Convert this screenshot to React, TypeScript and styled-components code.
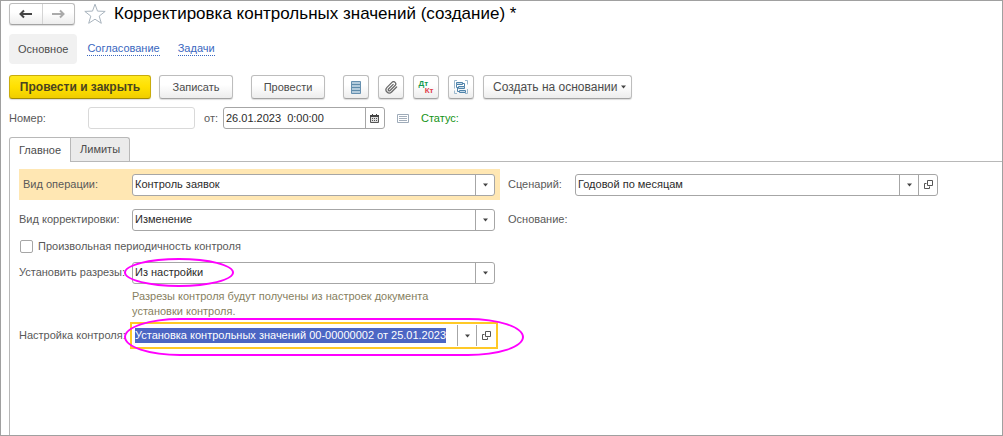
import React, { useEffect, useRef } from 'react';
import styled, { createGlobalStyle, css } from 'styled-components';

const GlobalStyle = createGlobalStyle`
  *, *::before, *::after { box-sizing: border-box; }
  body { margin: 0; background: #fff; }
  body, button, input, select {
    font-family: "Liberation Sans", Arial, sans-serif;
    font-size: 11px;
    line-height: 15px;
    color: #4c4c4c;
  }
`;

const Page = styled.main`
  display: flex;
  flex-direction: column;
  min-height: 100vh;
  padding: 2px 0 0 8px;
  border: 1px solid #a0a0a0;
`;

const TitleBar = styled.header`
  display: flex;
  align-items: center;
  height: 22px;
`;

const raised = css`
  border: 1px solid #bdbdbd;
  border-bottom-color: #a3a3a3;
  border-radius: 3px;
  background: linear-gradient(#fff 40%, #ededed);
  box-shadow: 0 1px 1px #ddd;
`;

const History = styled.nav`
  ${raised}
  display: flex;
  width: 66px;
  height: 22px;
`;

const HistoryButton = styled.button`
  display: flex;
  flex: 1;
  align-items: center;
  justify-content: center;
  padding: 0;
  border: 0;
  background: none;
  & + & { border-left: 1px solid #d4d4d4; }
`;

const StarButton = styled.button`
  display: flex;
  margin: 0 8px 0 9px;
  padding: 0;
  border: 0;
  background: none;
`;

const Title = styled.h1`
  margin: 0;
  font-size: 17px;
  font-weight: 400;
  line-height: 20px;
  color: #000;
`;

const Sections = styled.nav`
  display: flex;
  align-items: center;
  gap: 18px;
  margin-top: 9px;
`;

const SectionCurrent = styled.a`
  padding: 8px 9px 7px;
  border-radius: 4px;
  background: #f1f1f1;
  color: #4c4c4c;
  text-decoration: none;
  margin-right: -8px;
`;

const SectionLink = styled.a`
  color: #3a67c0;
  line-height: 13px;
  text-decoration: none;
  border-bottom: 1px dotted #3a67c0;
`;

const Toolbar = styled.div`
  display: flex;
  align-items: center;
  gap: 8px;
  margin-top: 11px;
`;

const ButtonGroup = styled.div`
  display: flex;
  gap: 9px;
  margin-left: 10px;
`;

type ButtonKind = 'plain' | 'primary' | 'icon' | 'menu';

const buttonKinds = {
  plain: css`min-width: 74px;`,
  icon: css`width: 26px; padding: 0;`,
  menu: css`padding: 0 4px 0 9px; font-size: 12px;`,
  primary: css`
    min-width: 142px;
    border-color: #c9ac0c;
    border-bottom-color: #a38b05;
    background: linear-gradient(#ffe91f, #ffe000 50%, #efcd00);
    font-size: 12px;
    font-weight: 700;
    color: #4a4420;
  `,
};

const Button = styled.button<{ $kind?: ButtonKind }>`
  ${raised}
  display: flex;
  align-items: center;
  justify-content: center;
  gap: 2px;
  height: 24px;
  padding: 0 9px;
  white-space: nowrap;
  ${p => buttonKinds[p.$kind ?? 'plain']}
`;

const NumberRow = styled.div`
  display: flex;
  align-items: center;
  margin-top: 8px;
`;

const Label = styled.label<{ $width?: number }>`
  flex: none;
  width: ${p => (p.$width ? `${p.$width}px` : 'auto')};
  color: #595959;
  white-space: nowrap;
`;

const NumberInput = styled.input`
  width: 107px;
  height: 22px;
  margin-right: 9px;
  padding: 0 3px;
  border: 1px solid #d9d9d9;
  border-radius: 3px;
`;

const Field = styled.div<{ $active?: boolean }>`
  position: relative;
  display: flex;
  flex: 1;
  min-width: 0;
  height: 22px;
  border: 1px solid #a6a6a6;
  border-radius: 3px;
  background: #fff;
  ${p => p.$active && css`
    height: 27px;
    margin: 0 -3px 0 -2px;
    padding: 1px;
    border: 2px solid #ffc926;
    border-radius: 0;
  `}
`;

const DateField = styled(Field)`
  flex: none;
  width: 162px;
  margin: 0 12px 0 5px;
`;

const fieldText = css`
  flex: 1;
  min-width: 0;
  padding: 0 2px;
  border: 0;
  outline: 0;
  background: none;
  color: #2b2b2b;
`;

const TextInput = styled.input`
  ${fieldText}
  white-space: pre;
  &::selection { background: #4c66c4; color: #fff; }
`;

const Select = styled.select`
  ${fieldText}
  appearance: none;
`;

const FieldButton = styled.button`
  display: flex;
  flex: none;
  align-items: center;
  justify-content: center;
  width: 19px;
  padding: 0;
  border: 0;
  border-left: 1px solid #a6a6a6;
  background: none;
`;

const Status = styled.span`
  margin-left: 12px;
  color: #149314;
`;

const TabList = styled.div`
  display: flex;
  margin-top: 8px;
`;

const Tab = styled.button<{ $active?: boolean }>`
  position: relative;
  height: 24px;
  padding: 0 9px;
  border: 1px solid #b8b8b8;
  border-bottom: 0;
  background: ${p => (p.$active ? '#fff' : '#ebebeb')};
  border-radius: ${p => (p.$active ? '3px 0 0 0' : '0 3px 0 0')};
  & + & { border-left: 0; }
  ${p => p.$active && css`
    height: 25px;
    margin-bottom: -1px;
  `}
`;

const Pane = styled.section`
  flex: 1;
  padding: 7px 8px 8px 9px;
  border-top: 1px solid #b8b8b8;
  border-left: 1px solid #b8b8b8;
`;

const Columns = styled.div`
  display: grid;
  grid-template-columns: minmax(0, 481px) minmax(0, 435px);
  gap: 8px;
`;

const Column = styled.div`
  display: flex;
  flex-direction: column;
`;

const FormRow = styled.div<{ $highlight?: boolean }>`
  display: flex;
  align-items: center;
  min-height: 31px;
  padding-right: 5px;
  background: ${p => (p.$highlight ? '#ffe7b3' : 'none')};
  ${p => p.$highlight && css`
    & > ${Label} { padding-left: 4px; }
  `}
`;

const RowStack = styled.div`
  display: flex;
  flex-direction: column;
  gap: 4px;
`;

const CheckRow = styled.label`
  display: flex;
  align-items: center;
  gap: 5px;
  height: 22px;
  color: #595959;
`;

const CheckBox = styled.input`
  appearance: none;
  width: 13px;
  height: 13px;
  margin: 0 0 0 1px;
  border: 1px solid #a6a6a6;
  border-radius: 2px;
  background: #fff;
`;

const Hint = styled.p`
  max-width: 330px;
  margin: 1px 0 1px 113px;
  color: #877f5f;
`;

const Marked = styled.div`
  position: relative;
`;

const Mark = styled.span<{ $wide?: boolean }>`
  position: absolute;
  left: 105px;
  top: ${p => (p.$wide ? -2 : 1)}px;
  width: ${p => (p.$wide ? 400 : 110)}px;
  height: ${p => (p.$wide ? 38 : 29)}px;
  border: 2px solid #f0f;
  border-radius: ${p => (p.$wide ? '56px / 50%' : '50%')};
  pointer-events: none;
`;

const Arrow = () => (
  <svg width="7" height="4" viewBox="0 0 7 4" aria-hidden="true">
    <path d="M1 .5h5L3.500 3.500z" fill="#444" />
  </svg>
);

const OpenIcon = () => (
  <svg width="9" height="9" viewBox="0 0 9 9" fill="none" stroke="#555" aria-hidden="true">
    <path d="M3.500.5h5v5h-5zM2.500 3.500h-2v5h5v-2" />
  </svg>
);

const HistoryArrow = ({ color, forward }: { color: string; forward?: boolean }) => (
  <svg width="13" height="10" viewBox="0 0 13 10" fill="none" stroke={color} strokeWidth="2" aria-hidden="true">
    <path d={forward ? 'M0 5h11M8 1.500l3.500 3.500L8 8.500' : 'M13 5H2M5 1.500L1.500 5 5 8.500'} />
  </svg>
);

const StarIcon = () => (
  <svg width="22" height="22" viewBox="0 0 22 22" fill="#fff" stroke="#a9b4be" aria-hidden="true">
    <path d="M11 1.200l2.500 6.900 7.700.3-6 4.700 2.100 7.200L11 16.200l-6.300 4.100 2.100-7.200-6-4.700 7.700-.3z" />
  </svg>
);

const RegisterIcon = () => (
  <svg width="10" height="13" viewBox="0 0 10 13" aria-hidden="true">
    <path d="M.5.500h9v12h-9z" fill="#b3cbdc" stroke="#6690b0" />
    <path d="M1 3.500h8M1 6.500h8M1 9.500h8" stroke="#5f8cab" />
  </svg>
);

const ClipIcon = () => (
  <svg width="13" height="13" viewBox="0 0 24 24" fill="none" stroke="#6a6a6a" strokeWidth="2.400" strokeLinecap="round" aria-hidden="true">
    <path d="M21.400 11.100l-9.200 9.200a6 6 0 0 1-8.500-8.500l9.200-9.200a4 4 0 0 1 5.700 5.700l-9.200 9.200a2 2 0 0 1-2.800-2.900l8.500-8.400" />
  </svg>
);

const Postings = styled.span`
  display: flex;
  flex-direction: column;
  width: 15px;
  font-size: 8px;
  font-weight: 700;
  line-height: 7px;
  text-align: left;
  color: #159a50;
  & > span { align-self: flex-end; color: #e0404a; }
`;

const StructureIcon = () => (
  <svg width="14" height="14" viewBox="0 0 14 14" fill="none" stroke="#4f83aa" aria-hidden="true">
    <path d="M3 .5H.5v8M11 .5h2.500v4M.5 10.500v3H3M13.500 9v4.500H11" stroke="#9bb8cd" />
    <path d="M2.500 2.500h6v2h-6zM4.500 6.500h6v2h-6zM5.500 10.500h6v2h-6z" fill="#c4d9e8" />
    <path d="M8.500 3.500h2v3M2.500 4.500v3h2M3.500 8v3.500h2" />
  </svg>
);

const CalendarIcon = () => (
  <svg width="9" height="9" viewBox="0 0 9 9" aria-hidden="true">
    <path d="M.5 1.500h8v7h-8z" fill="#ddd" stroke="#555" />
    <path d="M0 1h9v2H0zM2 0h1v1H2zM6 0h1v1H6z" fill="#444" />
    <path d="M2 4.500h5M2 6.500h5" stroke="#555" strokeDasharray="1 1" />
  </svg>
);

const ListIcon = () => (
  <svg width="12" height="9" viewBox="0 0 12 9" fill="none" aria-hidden="true">
    <path d="M.5.500h11v8H.5z" stroke="#9eabb9" />
    <path d="M2 2.500h8M2 4.500h8M2 6.500h8" stroke="#a3aebb" />
  </svg>
);

interface ChoiceProps {
  id: string;
  label: string;
  value: string;
  labelWidth?: number;
  highlight?: boolean;
  openable?: boolean;
}

const Choice = ({ id, label, value, labelWidth = 113, highlight, openable }: ChoiceProps) => (
  <FormRow $highlight={highlight}>
    <Label htmlFor={id} $width={labelWidth}>{label}</Label>
    <Field>
      <Select id={id} defaultValue={value}>
        <option>{value}</option>
      </Select>
      <FieldButton type="button" aria-label="Выбрать"><Arrow /></FieldButton>
      {openable && <FieldButton type="button" aria-label="Открыть"><OpenIcon /></FieldButton>}
    </Field>
  </FormRow>
);

export default function App() {
  const setting = useRef<HTMLInputElement>(null);

  useEffect(() => {
    setting.current?.focus();
    setting.current?.select();
  }, []);

  return (
    <Page>
      <GlobalStyle />
      <TitleBar>
        <History>
          <HistoryButton type="button" aria-label="Назад"><HistoryArrow color="#444" /></HistoryButton>
          <HistoryButton type="button" aria-label="Вперед"><HistoryArrow color="#aaa" forward /></HistoryButton>
        </History>
        <StarButton type="button" aria-label="В избранное"><StarIcon /></StarButton>
        <Title>Корректировка контрольных значений (создание) *</Title>
      </TitleBar>

      <Sections>
        <SectionCurrent href="#main">Основное</SectionCurrent>
        <SectionLink href="#approval">Согласование</SectionLink>
        <SectionLink href="#tasks">Задачи</SectionLink>
      </Sections>

      <Toolbar>
        <Button type="button" $kind="primary">Провести и закрыть</Button>
        <Button type="button">Записать</Button>
        <ButtonGroup><Button type="button">Провести</Button></ButtonGroup>
        <ButtonGroup>
          <Button type="button" $kind="icon" aria-label="Реестр"><RegisterIcon /></Button>
          <Button type="button" $kind="icon" aria-label="Файлы"><ClipIcon /></Button>
          <Button type="button" $kind="icon"><Postings>Дт<span>Кт</span></Postings></Button>
          <Button type="button" $kind="icon" aria-label="Структура"><StructureIcon /></Button>
          <Button type="button" $kind="menu">Создать на основании <Arrow /></Button>
        </ButtonGroup>
      </Toolbar>

      <NumberRow>
        <Label htmlFor="number" $width={79}>Номер:</Label>
        <NumberInput id="number" />
        <Label htmlFor="date">от:</Label>
        <DateField>
          <TextInput id="date" defaultValue="26.01.2023  0:00:00" />
          <FieldButton type="button" aria-label="Календарь"><CalendarIcon /></FieldButton>
        </DateField>
        <ListIcon />
        <Status>Статус:</Status>
      </NumberRow>

      <TabList role="tablist">
        <Tab type="button" role="tab" aria-selected="true" $active>Главное</Tab>
        <Tab type="button" role="tab" aria-selected="false">Лимиты</Tab>
      </TabList>

      <Pane role="tabpanel">
        <Columns>
          <Column>
            <RowStack>
              <Choice id="operation" label="Вид операции:" value="Контроль заявок" highlight />
              <Choice id="correction" label="Вид корректировки:" value="Изменение" />
            </RowStack>
            <CheckRow>
              <CheckBox type="checkbox" />
              Произвольная периодичность контроля
            </CheckRow>
            <Marked>
              <Choice id="cuts" label="Установить разрезы:" value="Из настройки" />
              <Mark />
            </Marked>
            <Hint>Разрезы контроля будут получены из настроек документа установки контроля.</Hint>
            <Marked>
              <FormRow>
                <Label htmlFor="setting" $width={113}>Настройка контроля:</Label>
                <Field $active>
                  <TextInput
                    id="setting"
                    ref={setting}
                    defaultValue="Установка контрольных значений 00-00000002 от 25.01.2023"
                  />
                  <FieldButton type="button" aria-label="Выбрать"><Arrow /></FieldButton>
                  <FieldButton type="button" aria-label="Открыть"><OpenIcon /></FieldButton>
                </Field>
              </FormRow>
              <Mark $wide />
            </Marked>
          </Column>
          <Column>
            <RowStack>
              <Choice id="scenario" label="Сценарий:" value="Годовой по месяцам" labelWidth={67} openable />
              <FormRow><Label as="span">Основание:</Label></FormRow>
            </RowStack>
          </Column>
        </Columns>
      </Pane>
    </Page>
  );
}
